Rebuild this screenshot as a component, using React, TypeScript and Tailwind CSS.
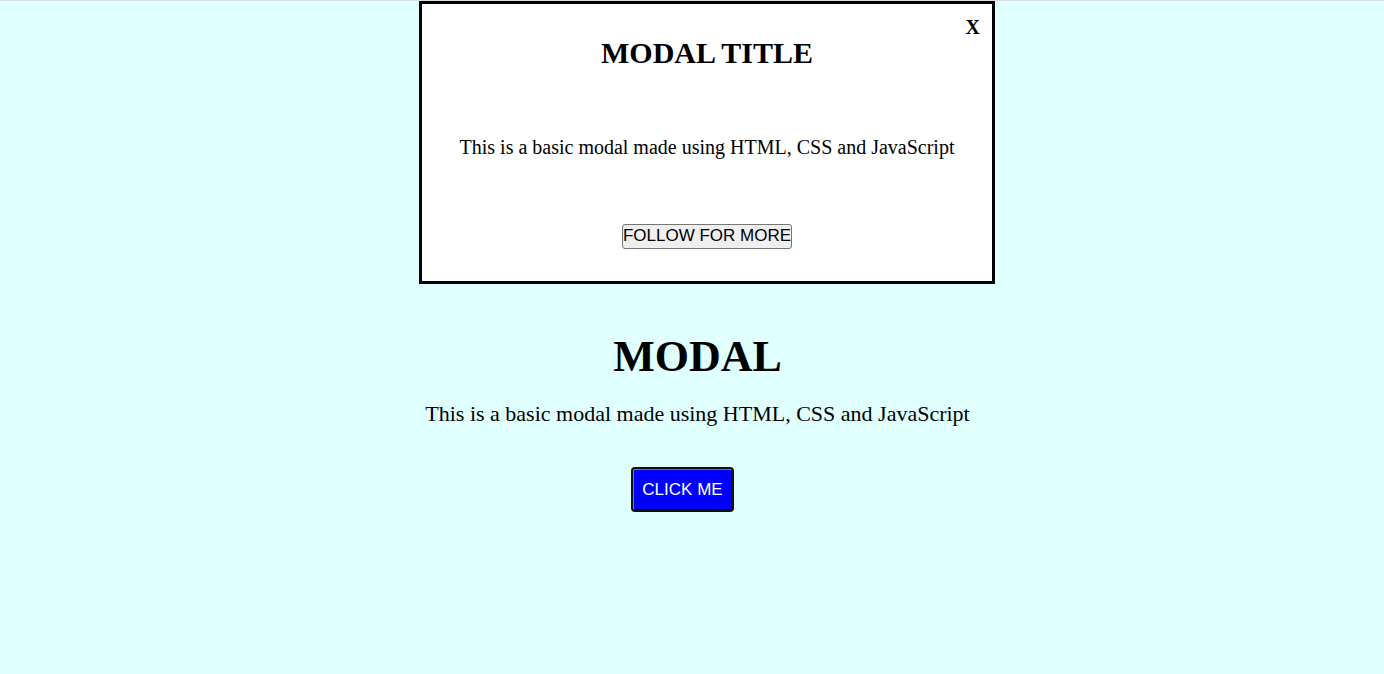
export default function App() {
  return (
    <div className="min-h-screen border-t border-[#d8dce0] bg-[#e0ffff] font-['Liberation_Serif',serif] text-black">
      <div className="pl-[30px]">
        <section
          role="dialog"
          aria-labelledby="modal-title"
          className="relative mx-auto flex w-full max-w-[576px] flex-col items-center border-[3px] border-black bg-white pt-[33px] pb-8"
        >
          <button type="button" aria-label="Close" className="absolute top-[11px] right-3 text-xl leading-6 font-bold">
            X
          </button>
          <h2 id="modal-title" className="text-[30px] leading-8 font-bold">MODAL TITLE</h2>
          <p className="mt-16 text-xl leading-7">This is a basic modal made using HTML, CSS and JavaScript</p>
          <button
            type="button"
            className="mt-[63px] h-[25px] rounded-[3px] border border-[#767676] bg-[#efefef] pb-0.5 font-['Liberation_Sans',sans-serif] text-[17px] leading-5"
          >
            FOLLOW FOR MORE
          </button>
        </section>
      </div>
      <main className="flex flex-col items-center pt-[49px] pl-[11px]">
        <h1 className="text-[44px] leading-12 font-bold">MODAL</h1>
        <p className="mt-[19px] text-[22px] leading-7">This is a basic modal made using HTML, CSS and JavaScript</p>
        <div className="mt-[41px] pr-[30px]">
          <button
            type="button"
            className="h-[41px] rounded-[2px] border border-t-[#767676] border-r-black border-b-black border-l-[#767676] bg-[#0000ff] px-2 font-['Liberation_Sans',sans-serif] text-[17px] text-white outline-2 outline-[#101010]"
          >
            CLICK ME
          </button>
        </div>
      </main>
    </div>
  );
}
